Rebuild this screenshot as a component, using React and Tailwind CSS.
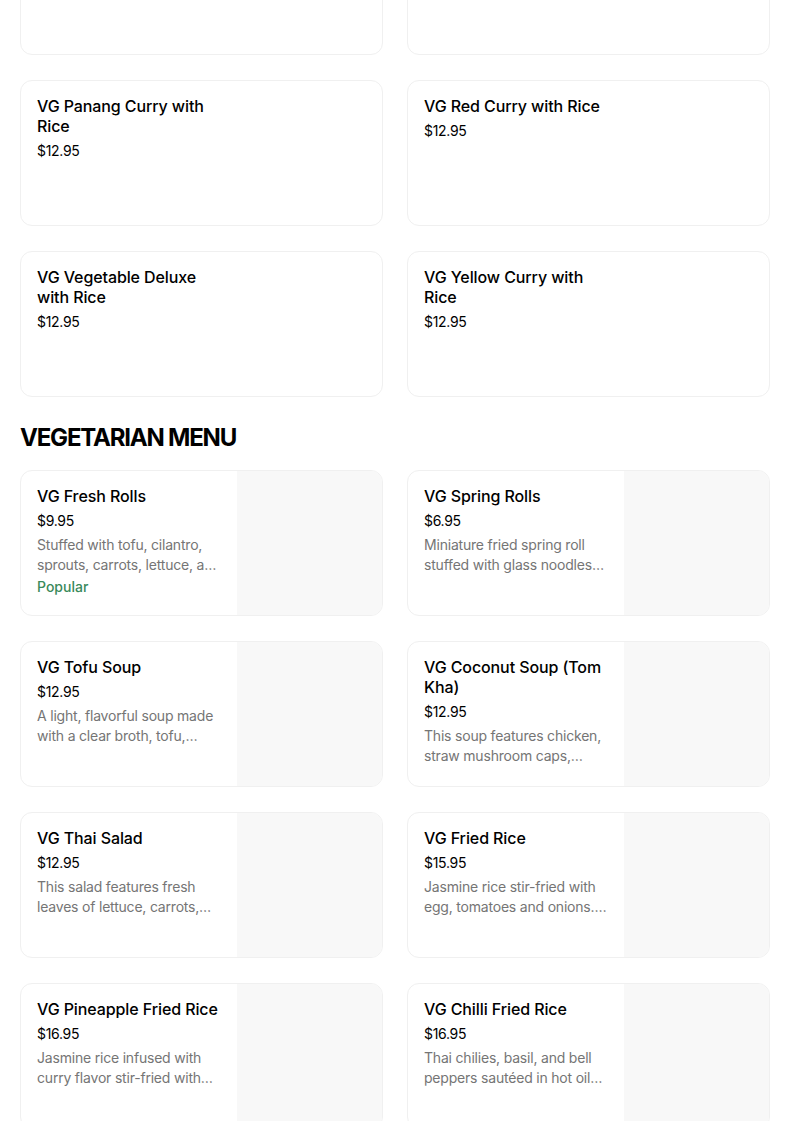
import React from "react";

const topItems = [
  { name: "", price: "", hidden: true },
  { name: "", price: "", hidden: true },
  { name: "VG Panang Curry with Rice", price: "$12.95" },
  { name: "VG Red Curry with Rice", price: "$12.95" },
  { name: "VG Vegetable Deluxe with Rice", price: "$12.95" },
  { name: "VG Yellow Curry with Rice", price: "$12.95" },
];

const vegItems = [
  { name: "VG Fresh Rolls", price: "$9.95", desc: "Stuffed with tofu, cilantro, sprouts, carrots, lettuce, and rice noodles wrapped in rice paper", popular: true },
  { name: "VG Spring Rolls", price: "$6.95", desc: "Miniature fried spring roll stuffed with glass noodles and vegetables" },
  { name: "VG Tofu Soup", price: "$12.95", desc: "A light, flavorful soup made with a clear broth, tofu, vegetables and herbs" },
  { name: "VG Coconut Soup (Tom Kha)", price: "$12.95", desc: "This soup features chicken, straw mushroom caps, galangal and lemongrass" },
  { name: "VG Thai Salad", price: "$12.95", desc: "This salad features fresh leaves of lettuce, carrots, cucumber and tomatoes" },
  { name: "VG Fried Rice", price: "$15.95", desc: "Jasmine rice stir-fried with egg, tomatoes and onions. Garnished with green onion" },
  { name: "VG Pineapple Fried Rice", price: "$16.95", desc: "Jasmine rice infused with curry flavor stir-fried with pineapple and cashew nuts" },
  { name: "VG Chilli Fried Rice", price: "$16.95", desc: "Thai chilies, basil, and bell peppers sautéed in hot oil with jasmine rice" },
];

function Card({ item, image }) {
  return (
    <div className="h-[146px] rounded-xl border border-[#f0f0f0] bg-white overflow-hidden flex">
      <div className="w-[216px] shrink-0 pl-4 pr-4 pt-[15px]">
        {!item.hidden && (
          <>
            <div className="text-[16px] leading-5 font-medium text-black tracking-[-0.1px]">{item.name}</div>
            <div className="mt-[5px] text-[14px] leading-5 text-black tracking-[-0.3px]">{item.price}</div>
            {item.desc && (
              <div className="mt-1 text-[14px] leading-5 text-[#757575] line-clamp-2 tracking-[-0.2px]">{item.desc}</div>
            )}
            {item.popular && (
              <div className="mt-[2px] text-[14px] leading-5 font-medium text-[#3a8a5b]">Popular</div>
            )}
          </>
        )}
      </div>
      {image && <div className="flex-1 bg-[#f8f8f8]" />}
    </div>
  );
}

export default function App() {
  return (
    <div className="min-h-screen bg-white overflow-hidden" style={{ fontFamily: "Inter, 'Noto Sans', sans-serif" }}>
      <div className="pl-5 pr-[34px] mt-[-91px]">
        <div className="grid grid-cols-2 gap-x-6 gap-y-[25px]">
          {topItems.map((it, i) => (
            <Card key={i} item={it} />
          ))}
        </div>
        <h2 className="mt-[25px] mb-4 text-[24px] leading-8 font-bold tracking-[-1.2px] text-black">VEGETARIAN MENU</h2>
        <div className="grid grid-cols-2 gap-x-6 gap-y-[25px]">
          {vegItems.map((it, i) => (
            <Card key={i} item={it} image />
          ))}
        </div>
      </div>
    </div>
  );
}
